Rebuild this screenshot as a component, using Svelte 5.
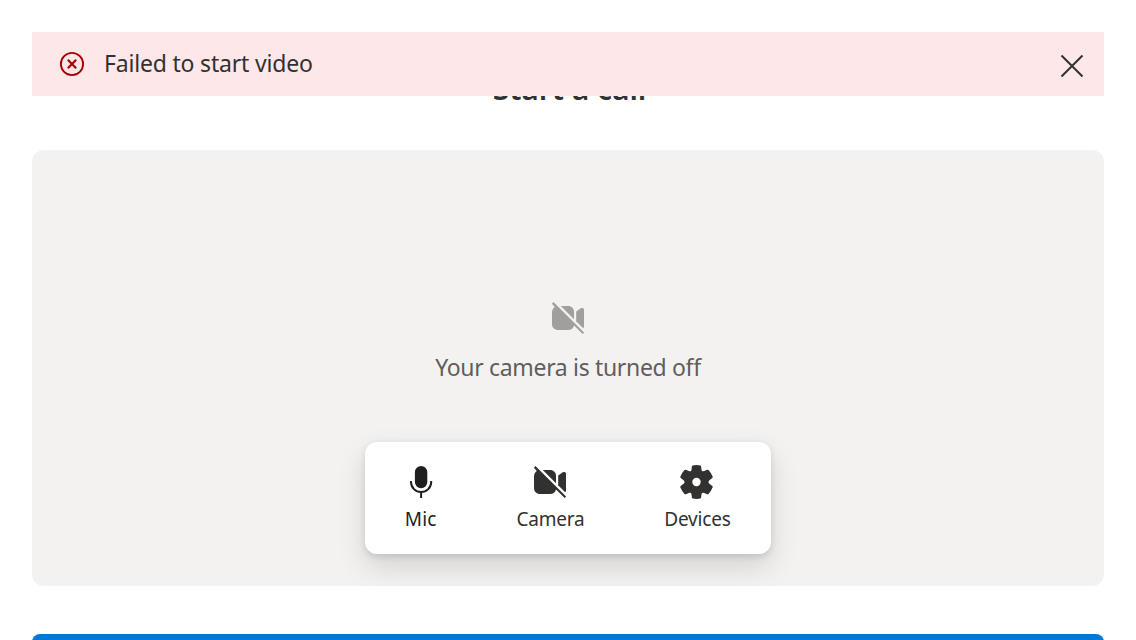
<script>
  const actions = [
    { label: 'Mic', icon: 'mic' },
    { label: 'Camera', icon: 'camera' },
    { label: 'Devices', icon: 'gear' }
  ];
</script>

{#snippet cameraOff()}
  <svg class="icon" viewBox="0 0 32 32" fill="currentColor" aria-hidden="true">
    <path d="M1.4 0.1 32.1 30.6 30.7 32.1 22 23.4C21.2 26.3 19 28 16 28H6.2C2.5 28 0 25.5 0 22V10.5C0 8 1.1 6.2 2.8 4.9L-.1 1.7Z" />
    <path d="M8.8 4H16C19.6 4 22 6.5 22 10V17.2Z" />
    <path d="M24.2 9.6 28.8 6.3C30.2 5.4 32 6 32 7.8V24.2C32 25 31.7 25.7 31.2 26.2L24.2 19.3Z" />
  </svg>
{/snippet}

<main>
  <div class="banner" role="alert">
    <svg class="error" viewBox="0 0 24 24" fill="none" stroke="currentColor" aria-hidden="true">
      <circle cx="12" cy="12" r="11.1" stroke-width="1.9" />
      <path d="M7.8 7.8 16.2 16.2M16.2 7.8 7.8 16.2" stroke-width="2.2" />
    </svg>
    <span class="message">Failed to start video</span>
    <button class="close" aria-label="Close">
      <svg viewBox="0 0 22 22" fill="none" stroke="currentColor" stroke-width="2" aria-hidden="true">
        <path d="M.5.5 21.5 21.5M21.5.5.5 21.5" />
      </svg>
    </button>
  </div>

  <h1>Start a call</h1>

  <section class="preview">
    <div class="off">
      {@render cameraOff()}
      <p>Your camera is turned off</p>
    </div>
    <div class="controls">
      {#each actions as action}
        <button class={action.icon}>
          {#if action.icon === 'mic'}
            <svg class="icon" viewBox="0 0 32 32" aria-hidden="true">
              <rect x="9.9" y="0" width="12.4" height="22.2" rx="6.2" fill="currentColor" />
              <path d="M6 15V16A10.1 10.1 0 0 0 26.2 16V15M16.1 26V32" fill="none" stroke="currentColor" stroke-width="2" />
            </svg>
          {:else if action.icon === 'camera'}
            {@render cameraOff()}
          {:else}
            <svg class="icon" viewBox="0.5 0 32 32" aria-hidden="true">
              <path fill="currentColor" fill-rule="evenodd" d="M12.2-.5Q16-1.4 19.8-.5Q20.5-.3 20.6.4L21 3.8Q21.2 5.8 23.1 5.2L26.6 3.8Q27.4 3.5 28 4.1Q30.7 7 32.2 10.7Q32.4 11.4 31.8 11.9L28.9 14.2Q27 16 28.9 17.8L31.8 20.1Q32.4 20.6 32.2 21.3Q30.7 25 28 27.9Q27.4 28.5 26.6 28.2L23.1 26.8Q21.2 26.2 21 28.2L20.6 31.6Q20.5 32.3 19.8 32.5Q16 33.4 12.2 32.5Q11.5 32.3 11.4 31.6L11 28.2Q10.8 26.2 8.9 26.8L5.4 28.2Q4.6 28.5 4 27.9Q1.3 25-.2 21.3Q-.4 20.6.2 20.1L3.1 17.8Q5 16 3.1 14.2L.2 11.9Q-.4 11.4-.2 10.7Q1.3 7 4 4.1Q4.6 3.5 5.4 3.8L8.9 5.2Q10.8 5.8 11 3.8L11.4.4Q11.5-.3 12.2-.5ZM16 11.8A4.2 4.2 0 1 0 16 20.2A4.2 4.2 0 1 0 16 11.8Z" />
            </svg>
          {/if}
          <span>{action.label}</span>
        </button>
      {/each}
    </div>
  </section>

  <button class="start" aria-label="Start call"></button>
</main>

<style>
  :global(body) { margin: 0; background: #fff; overflow: hidden; }
  main {
    position: relative;
    box-sizing: border-box;
    height: 640px;
    padding: 64px 32px 0;
    overflow: hidden;
    color: #323130;
    font-family: 'Segoe UI', 'Noto Sans', sans-serif;
  }
  button { font: inherit; color: inherit; border: 0; padding: 0; background: none; }
  svg { display: block; overflow: visible; }
  .icon { width: 32px; height: 32px; }
  .banner {
    position: absolute;
    z-index: 1;
    top: 32px;
    left: 32px;
    right: 32px;
    height: 64px;
    box-sizing: border-box;
    display: flex;
    align-items: center;
    padding: 0 21px 0 28px;
    background: #fde7e9;
  }
  .error { width: 24px; height: 24px; color: #a80000; }
  .message { margin: 0 0 2px 20px; font-size: 23px; line-height: 32px; letter-spacing: -.19px; white-space: nowrap; }
  .close { margin: 4px 0 0 auto; }
  .close svg { width: 22px; height: 22px; }
  h1 { margin: 0; padding-left: 3px; height: 86px; font-size: 30px; line-height: 50px; font-weight: 600; letter-spacing: -.05px; text-align: center; }
  .preview {
    height: 436px;
    box-sizing: border-box;
    padding-top: 152px;
    display: flex;
    flex-direction: column;
    align-items: center;
    border-radius: 12px;
    background: #f3f2f1;
  }
  .off { display: flex; flex-direction: column; align-items: center; height: 140px; color: #a19f9d; }
  .off p { margin: 17px 0 0; font-size: 23px; line-height: 32px; letter-spacing: -.33px; color: #605e5c; white-space: nowrap; }
  .controls {
    display: flex;
    justify-content: space-between;
    box-sizing: border-box;
    width: 406px;
    height: 112px;
    margin-right: .8px;
    padding: 24px 40px 0;
    border-radius: 12px;
    background: #fff;
    box-shadow: 0 12.8px 28.8px rgba(0, 0, 0, .13), 0 2.4px 7.2px rgba(0, 0, 0, .11);
  }
  .controls button { display: flex; flex-direction: column; align-items: center; height: 70px; }
  .controls span { margin-top: 7px; font-size: 19px; line-height: 28px; letter-spacing: -.2px; }
  .mic { color: #201f1e; }
  .controls .mic span { letter-spacing: .1px; }
  .start { display: block; width: 100%; height: 64px; margin-top: 48px; border-radius: 8px; background: #0078d4; }
</style>
